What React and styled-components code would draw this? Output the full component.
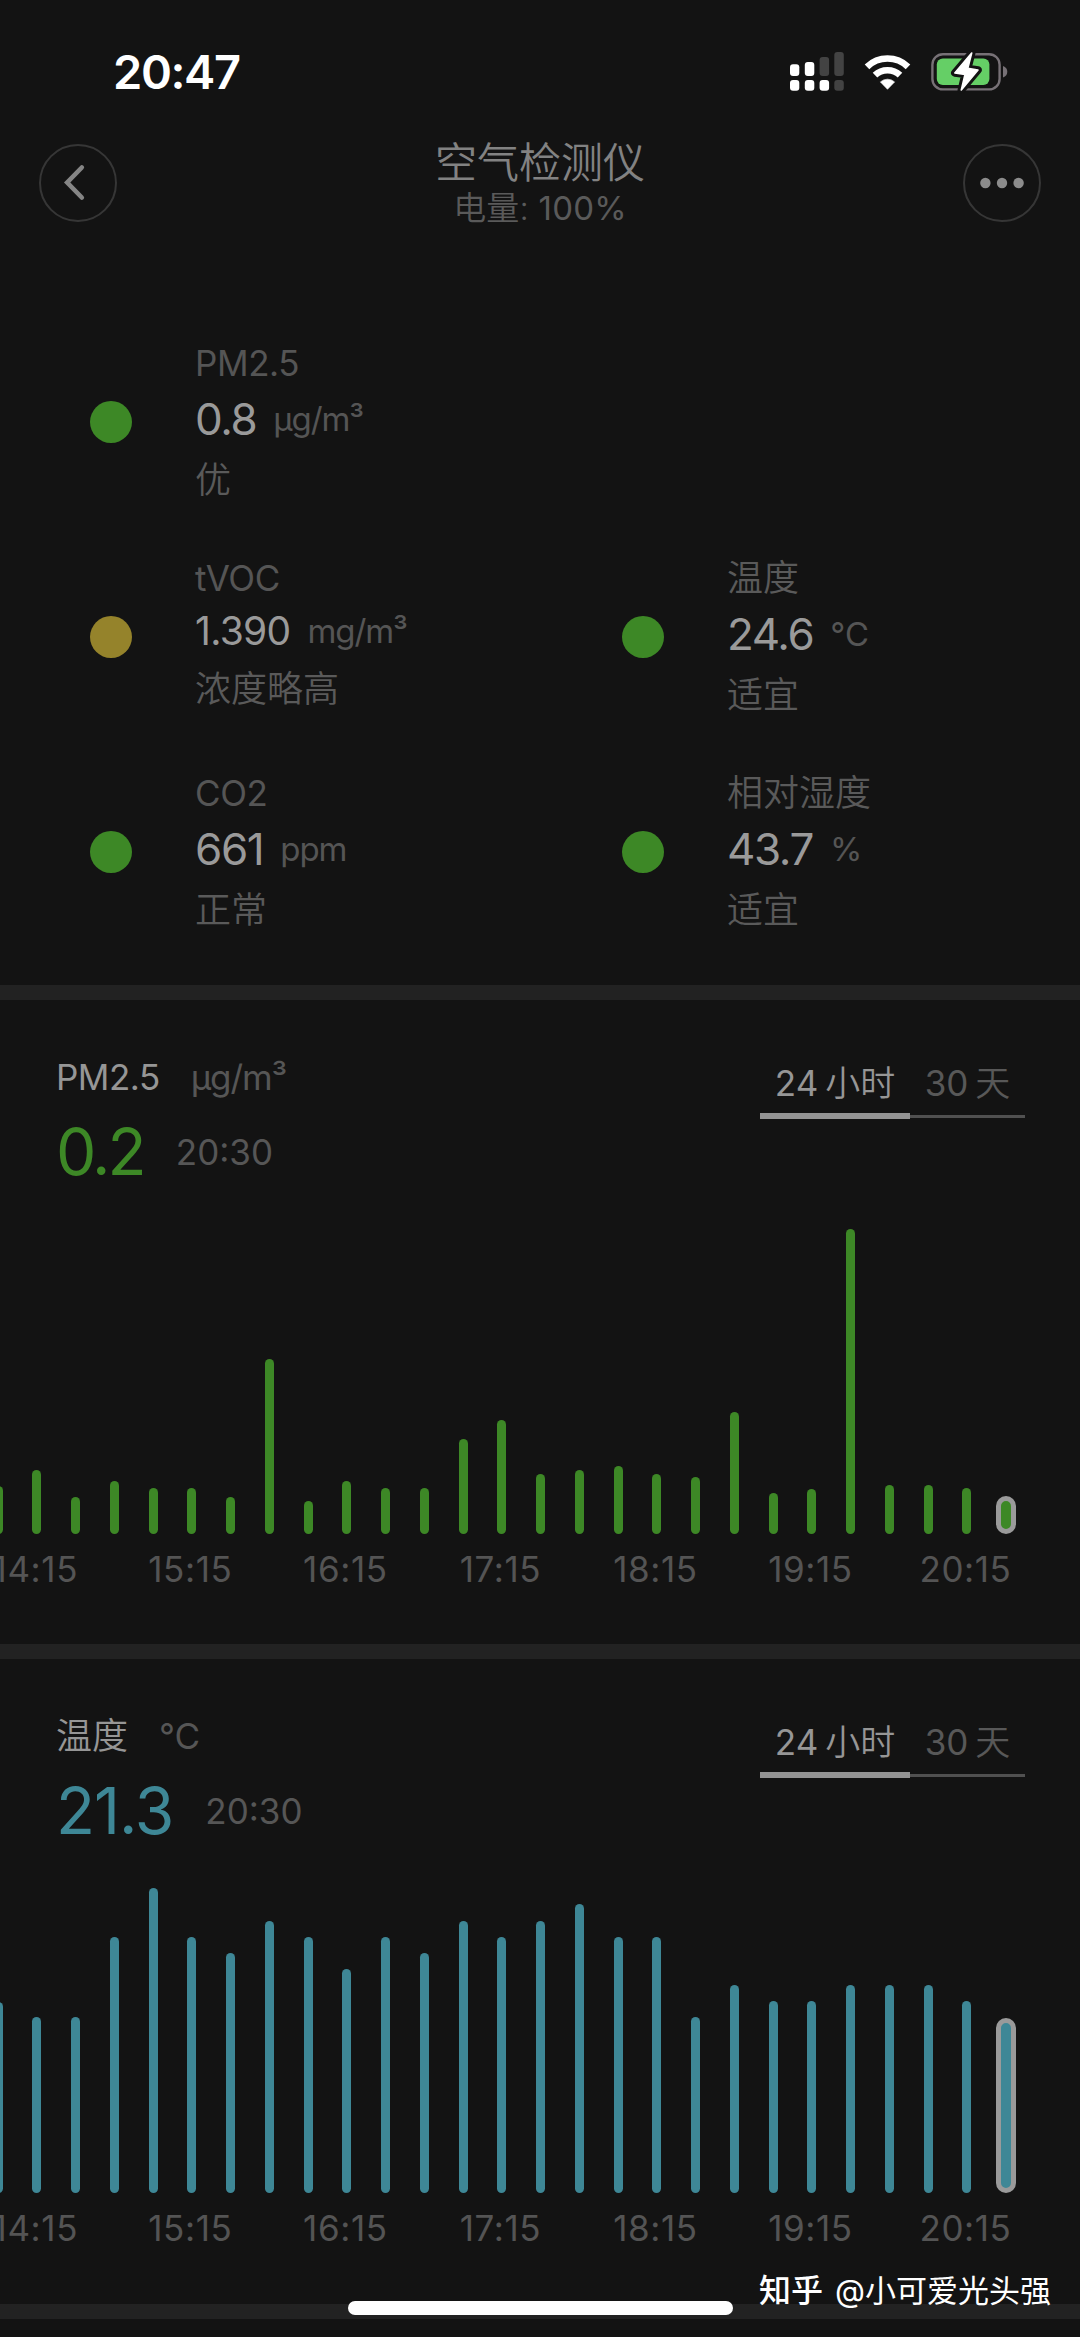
import React from "react";
import styled, { createGlobalStyle } from "styled-components";

const GlobalStyle = createGlobalStyle`
  * { box-sizing: border-box; }
  html, body { margin: 0; padding: 0; background: #131313; }
  body {
    font-family: Inter, "Noto Sans CJK SC", sans-serif;
    font-weight: 400;
    -webkit-font-smoothing: antialiased;
  }
`;

const GREEN = "#3d8826";
const TEAL = "#3e8796";
const YELLOW = "#95832b";

const Screen = styled.main`
  position: relative;
  width: 1080px;
  height: 2337px;
  overflow: hidden;
  background: #131313;
`;

const StatusBar = styled.header`
  height: 143px;
  padding: 0 72px 0 113px;
  display: flex;
  justify-content: space-between;
`;

const Clock = styled.time`
  margin-top: 42px;
  height: 60px;
  font-size: 47px;
  line-height: 60px;
  font-weight: 600;
  letter-spacing: -1.4px;
  color: #fff;
`;

const StatusIcons = styled.svg`
  margin-top: 50px;
  width: 218px;
  height: 44px;
`;

const NavBar = styled.nav`
  height: 196px;
  padding: 0 39px;
  display: flex;
  align-items: flex-start;
  justify-content: space-between;
`;

const RoundButton = styled.button`
  width: 78px;
  height: 78px;
  margin-top: 1px;
  padding: 0;
  display: flex;
  align-items: center;
  justify-content: center;
  border: 2px solid #363636;
  border-radius: 50%;
  background: none;
`;

const Titles = styled.div`
  text-align: center;
`;

const Title = styled.h1`
  margin: 0;
  height: 40px;
  font-size: 42px;
  line-height: 40px;
  font-weight: 350;
  color: #828282;
`;

const Subtitle = styled.div`
  height: 50px;
  font-size: 33px;
  line-height: 50px;
  font-weight: 350;
  letter-spacing: 0.2px;
  color: #5a5a5a;
`;

const Numeral = styled.span`
  font-weight: 400;
`;

const Metrics = styled.section`
  height: 646px;
  padding-left: 90px;
  display: grid;
  grid-template-columns: 532px 1fr;
  grid-template-rows: repeat(3, 215px);
`;

const Metric = styled.article`
  grid-column: ${(p) => p.$column};
  display: flex;
  gap: 63px;
`;

const Dot = styled.span`
  width: 42px;
  height: 42px;
  margin-top: 62px;
  border-radius: 50%;
  background: ${(p) => p.$color};
`;

const MetricLabel = styled.div`
  height: 48px;
  font-size: ${(p) => (p.$latin ? 35 : 36)}px;
  line-height: 48px;
  font-weight: ${(p) => (p.$latin ? 400 : 350)};
  letter-spacing: ${(p) => (p.$latin ? -0.4 : 0)}px;
  color: ${(p) => (p.$latin ? "#555" : "#5a5a5a")};
`;

const MetricReading = styled.div`
  height: ${(p) => (p.$compact ? 57 : 63)}px;
  display: flex;
  align-items: center;
  gap: 17px;
`;

const MetricValue = styled.span`
  font-size: ${(p) => (p.$compact ? 39 : 44)}px;
  letter-spacing: ${(p) => (p.$compact ? -0.7 : -1.4)}px;
  color: #9a9a9a;
`;

const MetricUnit = styled.span`
  font-size: 33px;
  letter-spacing: -1.1px;
  color: #555;
`;

const MetricState = styled.div`
  height: 57px;
  padding-top: 2px;
  font-size: 36px;
  line-height: 57px;
  font-weight: 350;
  color: #5a5a5a;
`;

const Divider = styled.hr`
  height: 15px;
  margin: 0;
  border: 0;
  background: #222;
`;

const ChartSection = styled.section`
  height: ${(p) => p.$height}px;
  overflow: hidden;
`;

const ChartHeader = styled.div`
  height: 204px;
  padding: 53px 55px 0 56px;
  display: flex;
  justify-content: space-between;
`;

const NameRow = styled.div`
  height: 49px;
  display: flex;
  align-items: center;
  gap: 31px;
`;

const ChartName = styled.span`
  font-size: ${(p) => (p.$latin ? 35 : 36)}px;
  line-height: 49px;
  font-weight: ${(p) => (p.$latin ? 400 : 350)};
  letter-spacing: ${(p) => (p.$latin ? -0.5 : 0)}px;
  color: #969696;
`;

const ChartUnit = styled.span`
  font-size: 35px;
  line-height: 49px;
  letter-spacing: -1.1px;
  color: #565656;
`;

const LatestRow = styled.div`
  height: 100px;
  display: flex;
  align-items: center;
  gap: 32px;
`;

const LatestValue = styled.span`
  font-size: 64px;
  line-height: 100px;
  letter-spacing: ${(p) => p.$spacing}px;
  color: ${(p) => p.$color};
`;

const LatestTime = styled.time`
  font-size: 35px;
  line-height: 100px;
  color: #565656;
`;

const Tabs = styled.div`
  height: 66px;
  display: flex;
  align-items: flex-end;
`;

const Tab = styled.button`
  width: ${(p) => p.$width}px;
  height: 66px;
  padding: 0 0 6px;
  border: 0;
  background:
    linear-gradient(
      ${(p) => (p.$active ? "#949494, #949494" : "#505050, #505050")}
    )
    0 ${(p) => (p.$active ? "60px" : "62px")} / 100%
    ${(p) => (p.$active ? "6px" : "3px")} no-repeat;
  font-family: inherit;
  font-size: 35px;
  line-height: 60px;
  font-weight: 350;
  word-spacing: -3px;
  white-space: nowrap;
  color: ${(p) => (p.$active ? "#969696" : "#585858")};
`;

const Bars = styled.div`
  height: 330px;
  padding-right: 55px;
  display: flex;
  align-items: flex-end;
  justify-content: flex-end;
`;

const Slot = styled.div`
  flex: none;
  width: 38.76px;
  display: flex;
  justify-content: center;
`;

const Bar = styled.i`
  display: block;
  width: 9px;
  border-radius: 4.5px;
  background: ${(p) => p.$color};
`;

const SelectedBar = styled(Bar)`
  width: 20px;
  border: 5.5px solid #9a9a9a;
  border-radius: 10px;
`;

const Axis = styled.div`
  height: 71px;
  padding-right: 37px;
  display: flex;
  justify-content: flex-end;
`;

const Tick = styled.span`
  flex: none;
  width: 155.04px;
  text-align: center;
  font-size: 35px;
  line-height: 71px;
  letter-spacing: 0.6px;
  color: #545454;
`;

const HomeIndicator = styled.div`
  position: absolute;
  left: 348px;
  top: 2301px;
  width: 385px;
  height: 14px;
  border-radius: 7px;
  background: #fff;
`;

const Watermark = styled.div`
  position: absolute;
  right: 29px;
  top: 2270px;
  display: flex;
  align-items: center;
  gap: 12px;
  font-size: 31px;
  line-height: 42px;
  white-space: nowrap;
  color: #fff;
`;

const Brand = styled.b`
  font-size: 32px;
  font-weight: 500;
`;

const METRICS = [
  { label: "PM2.5", latin: true, value: "0.8", unit: "μg/m³", state: "优", color: GREEN, column: 1 },
  { label: "tVOC", latin: true, value: "1.390", unit: "mg/m³", state: "浓度略高", color: YELLOW, column: 1, compact: true },
  { label: "温度", value: "24.6", unit: "℃", state: "适宜", color: GREEN, column: 2 },
  { label: "CO2", latin: true, value: "661", unit: "ppm", state: "正常", color: GREEN, column: 1 },
  { label: "相对湿度", value: "43.7", unit: "%", state: "适宜", color: GREEN, column: 2 },
];

const TIMES = ["14:15", "15:15", "16:15", "17:15", "18:15", "19:15", "20:15"];

const PM_BARS = [
  48, 64, 37.5, 53.5, 46, 46, 37.5, 175, 33.5, 53.5, 46, 46, 95, 114, 60.5,
  64.5, 68, 60.5, 57, 122, 41, 45, 305, 49.5, 49.5, 46, 38.5,
];

const TEMP_BARS = [
  191, 176.5, 176.5, 256.5, 305, 256.5, 240.5, 272.5, 256.5, 224.5, 256.5,
  240.5, 272.5, 256.5, 272.5, 289, 256.5, 256.5, 176.5, 208.5, 192, 192,
  208.5, 208.5, 208.5, 192, 175.5,
];

function Chart({ name, latin, unit, value, spacing, color, bars, height }) {
  return (
    <>
      <Divider />
      <ChartSection $height={height}>
        <ChartHeader>
          <div>
            <NameRow>
              <ChartName $latin={latin}>{name}</ChartName>
              <ChartUnit>{unit}</ChartUnit>
            </NameRow>
            <LatestRow>
              <LatestValue $color={color} $spacing={spacing}>{value}</LatestValue>
              <LatestTime>20:30</LatestTime>
            </LatestRow>
          </div>
          <Tabs>
            <Tab $active $width={150}><Numeral>24</Numeral> 小时</Tab>
            <Tab $width={115}><Numeral>30</Numeral> 天</Tab>
          </Tabs>
        </ChartHeader>
        <Bars>
          {bars.map((h, i) => {
            const Shape = i === bars.length - 1 ? SelectedBar : Bar;
            return (
              <Slot key={i}>
                <Shape $color={color} style={{ height: h }} />
              </Slot>
            );
          })}
        </Bars>
        <Axis>
          {TIMES.map((t) => (
            <Tick key={t}>{t}</Tick>
          ))}
        </Axis>
      </ChartSection>
    </>
  );
}

function SystemIcons() {
  const bolt = "M971.7 53 L954.8 73 L965 74.4 L961.3 90 L978 70 L967.8 68.4 Z";
  return (
    <StatusIcons viewBox="790 50 218 44">
      <g fill="#fff">
        <rect x="790" y="64.3" width="9.3" height="11.7" rx="3" />
        <rect x="804.8" y="62" width="9.5" height="14" rx="3" />
        <rect x="790" y="80" width="9.3" height="10.7" rx="3" />
        <rect x="804.8" y="80" width="9.5" height="10.7" rx="3" />
        <rect x="819.6" y="80" width="9.5" height="10.7" rx="3" />
      </g>
      <g fill="#434343">
        <rect x="819.6" y="57" width="9.5" height="19" rx="3" />
        <rect x="834.3" y="52" width="9.5" height="24" rx="3" />
        <rect x="834.3" y="80" width="9.5" height="10.7" rx="3" />
      </g>
      <path d="M887.5 89.3 L880.4 81.9 A10.6 10.6 0 0 1 894.6 81.9 Z" fill="#fff" stroke="#fff" strokeWidth="0.6" strokeLinejoin="round" />
      <g fill="none" stroke="#fff" strokeWidth="6.6">
        <path d="M875 75.2 A18.2 18.2 0 0 1 900 75.2" />
        <path d="M867 66.8 A29.6 29.6 0 0 1 908 66.8" />
      </g>
      <rect x="932.4" y="54.2" width="67.2" height="35.2" rx="10.5" fill="none" stroke="#777176" strokeWidth="2.4" />
      <rect x="936.8" y="58.6" width="52.6" height="26.4" rx="6" fill="#65cf66" />
      <path d="M1003 66 Q1007.3 67.6 1007.3 71.7 Q1007.3 75.8 1003 77.4 Z" fill="#777176" />
      <path d={bolt} fill="#131313" stroke="#131313" strokeWidth="7.5" strokeLinejoin="round" />
      <path d={bolt} fill="#fff" stroke="#fff" strokeWidth="1.6" strokeLinejoin="round" />
    </StatusIcons>
  );
}

export default function App() {
  return (
    <Screen>
      <GlobalStyle />
      <StatusBar>
        <Clock>20:47</Clock>
        <SystemIcons />
      </StatusBar>
      <NavBar>
        <RoundButton aria-label="返回">
          <svg width="30" height="40" viewBox="0 0 30 40" fill="none" stroke="#858585" strokeWidth="4.6" strokeLinecap="round" strokeLinejoin="miter">
            <path d="M18.8 4.5 L4.2 19.5 L18.8 34.5" />
          </svg>
        </RoundButton>
        <Titles>
          <Title>空气检测仪</Title>
          <Subtitle>电量: <Numeral>100%</Numeral></Subtitle>
        </Titles>
        <RoundButton aria-label="更多">
          <svg width="50" height="14" viewBox="0 0 50 14" fill="#8c8c8c">
            <circle cx="8.4" cy="7" r="5.2" />
            <circle cx="25" cy="7" r="5.2" />
            <circle cx="41.6" cy="7" r="5.2" />
          </svg>
        </RoundButton>
      </NavBar>
      <Metrics>
        {METRICS.map((m) => (
          <Metric key={m.label} $column={m.column}>
            <Dot $color={m.color} />
            <div>
              <MetricLabel $latin={m.latin}>{m.label}</MetricLabel>
              <MetricReading $compact={m.compact}>
                <MetricValue $compact={m.compact}>{m.value}</MetricValue>
                <MetricUnit>{m.unit}</MetricUnit>
              </MetricReading>
              <MetricState>{m.state}</MetricState>
            </div>
          </Metric>
        ))}
      </Metrics>
      <Chart name="PM2.5" latin unit="μg/m³" value="0.2" spacing={-2.8} color={GREEN} bars={PM_BARS} height={644} />
      <Chart name="温度" unit="℃" value="21.3" spacing={-1} color={TEAL} bars={TEMP_BARS} height={645} />
      <Divider />
      <HomeIndicator />
      <Watermark>
        <Brand>知乎</Brand>
        <span>@小可爱光头强</span>
      </Watermark>
    </Screen>
  );
}
